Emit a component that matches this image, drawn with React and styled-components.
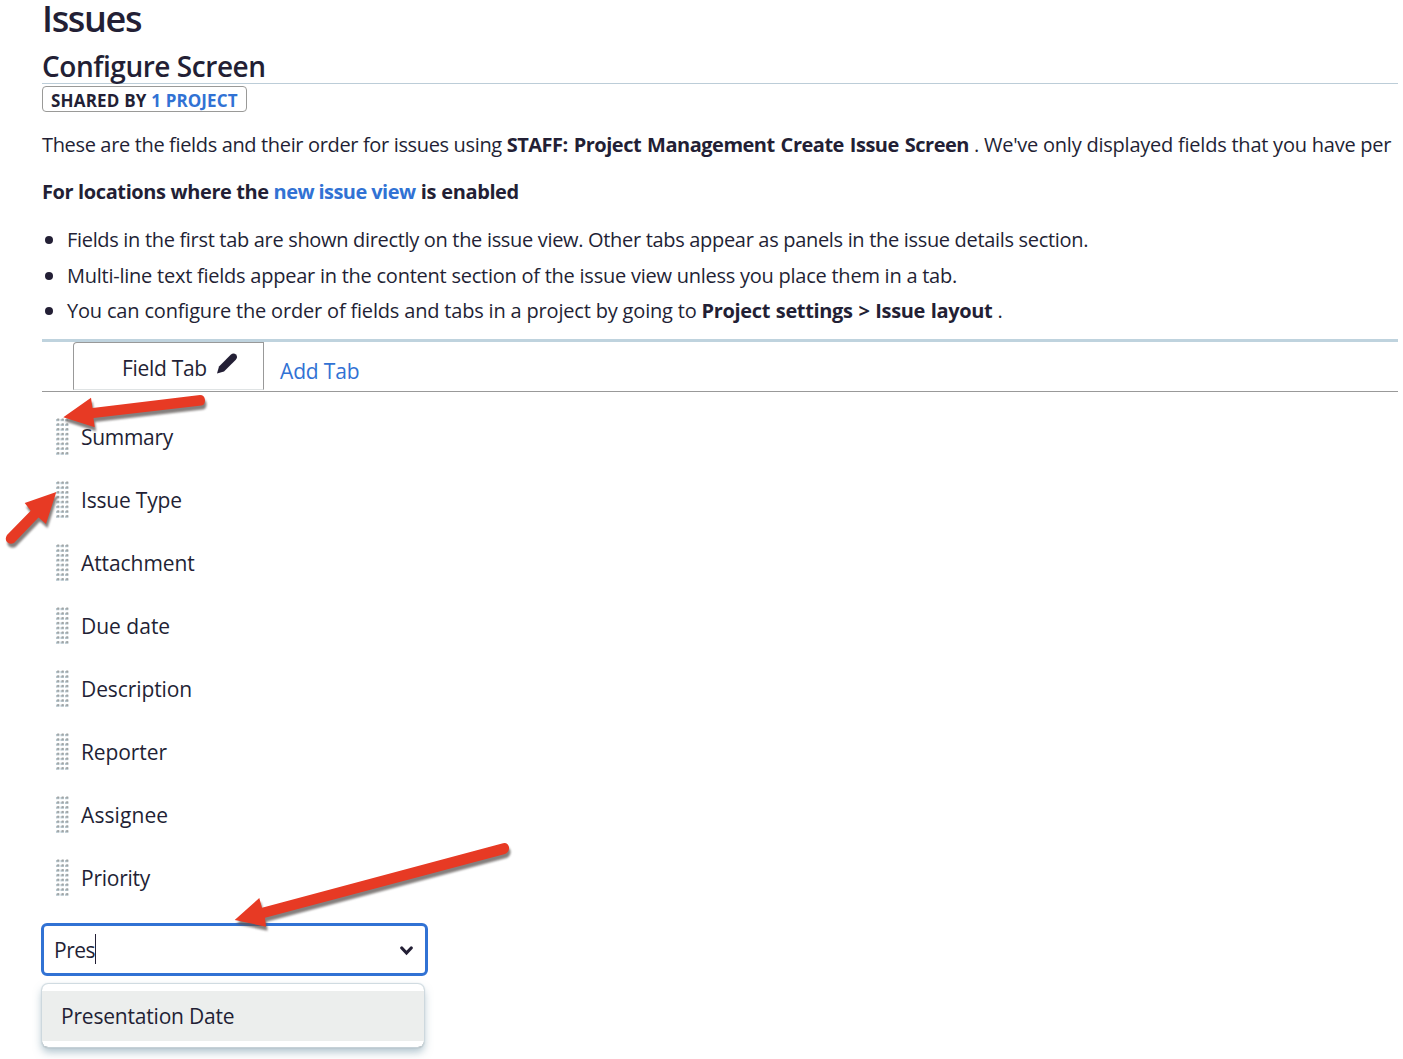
import React from "react";
import styled, { createGlobalStyle } from "styled-components";

const ink = "#231f35";
const blue = "#3172d4";

const GlobalStyle = createGlobalStyle`
  * { box-sizing: border-box; }
  body {
    margin: 0;
    background: #fff;
    color: ${ink};
    font-family: "Open Sans", "Noto Sans", sans-serif;
    overflow: hidden;
  }
`;

const Page = styled.main`
  position: relative;
  width: 1403px;
  height: 1059px;
  padding: 0 5px 0 42px;
  overflow: hidden;
`;

const Run = styled.span`
  letter-spacing: ${(p) => p.$ls || 0}px;
  word-spacing: ${(p) => p.$ws || 0}px;
  font-weight: ${(p) => (p.$bold ? 700 : "inherit")};
  color: ${(p) => (p.$link ? blue : "inherit")};
  white-space: pre;
`;

const Title = styled.h1`
  margin: 0;
  font-size: 36px;
  line-height: 37px;
  font-weight: 600;
`;

const Subtitle = styled.h2`
  margin: 0;
  padding-top: 11px;
  height: 47px;
  border-bottom: 1px solid #bccdd8;
  font-size: 28px;
  line-height: 37px;
  font-weight: 600;
`;

const SharedBadge = styled.div`
  width: 205px;
  height: 26px;
  margin-top: 2px;
  padding-left: 8px;
  border: 1px solid #9a9a98;
  border-radius: 4px;
  font-size: 17px;
  line-height: 28px;
  font-weight: 700;
  white-space: nowrap;
`;

const Paragraph = styled.p`
  margin: ${(p) => p.$top}px 0 0;
  font-size: 20px;
  line-height: 30px;
  white-space: nowrap;
`;

const Notes = styled.ul`
  margin: 15px 0 0;
  padding: 0;
  list-style: none;
  height: 117px;
`;

const Note = styled.li`
  display: flex;
  align-items: center;
  height: 35.5px;
  font-size: 20px;
  line-height: 35px;
  white-space: nowrap;

  &::before {
    content: "";
    width: 8px;
    height: 8px;
    margin: 1px 14px 0 3px;
    border-radius: 50%;
    background: ${ink};
    flex: none;
  }
`;

const TabBar = styled.nav`
  display: flex;
  height: 53px;
  padding-left: 31px;
  border-top: 3px solid #bfd3de;
  border-bottom: 1px solid #999;
  font-size: 21px;
`;

const ActiveTab = styled.div`
  display: flex;
  width: 191px;
  height: 48px;
  padding-left: 48px;
  border: 1px solid #999;
  border-bottom-color: #dfe3e4;
  border-radius: 4px 0 0 0;
  line-height: 51px;
  white-space: nowrap;

  svg { margin: 9px 0 0 9px; flex: none; }
`;

const AddTab = styled.a`
  margin-left: 16px;
  color: ${blue};
  line-height: 58px;
`;

const FieldList = styled.div`
  height: 531px;
  padding-top: 13px;
`;

const FieldRow = styled.div`
  display: flex;
  align-items: center;
  height: 63px;
  padding-left: 14px;
  font-size: 21px;
  line-height: 30px;

  svg { margin-right: 12px; flex: none; }
`;

const Select = styled.div`
  display: flex;
  align-items: center;
  width: 387px;
  height: 53px;
  margin-left: -1px;
  padding: 0 11px 0 10px;
  border: 3px solid ${blue};
  border-radius: 6px;
  font-size: 21px;

  span { padding-top: 1px; }
  svg { margin: 2px 0 0 auto; }
`;

const Caret = styled.i`
  width: 1px;
  height: 30px;
  margin-top: -2px;
  background: ${ink};
`;

const Menu = styled.div`
  width: 382px;
  height: 63px;
  margin: 8px 0 0;
  padding: 7px 0 6px;
  border-radius: 6px;
  box-shadow: 0 0 1px 1px #ccd8de, 0 1px 1px #8e9293, 0 5px 9px rgba(95, 135, 155, 0.5);
`;

const Option = styled.div`
  height: 50px;
  padding-left: 19px;
  background: #eceeed;
  font-size: 21px;
  line-height: 50px;
`;

const Annotations = styled.svg`
  position: absolute;
  left: 0;
  top: 0;
  pointer-events: none;
`;

const DragHandle = () => (
  <svg width="13" height="37" viewBox="0 0 13 37">
    {Array.from({ length: 24 }, (_, i) => {
      const x = (i % 3) * 4.5;
      const y = Math.floor(i / 3) * 4.8;
      return (
        <g key={i}>
          <rect x={x} y={y + 1} width="3.4" height="2.2" fill="#b9c9d1" />
          <rect x={x + 1.2} y={y + 0.5} width="2" height="2" fill="#a0a4a4" />
        </g>
      );
    })}
  </svg>
);

const Pencil = () => (
  <svg width="22" height="23" viewBox="0 0 22 23" fill={ink}>
    <path d="M1 21.5 L3 14.5 L14.7 2.8 Q17.5 0.4 20 2.6 Q22.2 5.1 19.8 7.8 L8 19.4 Z" />
  </svg>
);

const Chevron = () => (
  <svg width="14" height="10" viewBox="0 0 14 10" fill="none" stroke={ink} strokeWidth="3.2">
    <path d="M1.8 2 L6.5 7 L11.2 2" strokeLinecap="round" />
  </svg>
);

const fields = [
  ["Summary", -0.3],
  ["Issue Type", -0.2],
  ["Attachment", -0.08],
  ["Due date", 0],
  ["Description", -0.1],
  ["Reporter", -0.1],
  ["Assignee", 0.1],
  ["Priority", -0.25],
];

const arrows = [
  "M63.3 417.3 L91 397.7 L92.5 408 L200 395 Q204.5 395 205 400 Q205 405 201.5 405.5 L93.5 418 L94.7 427.3 Z",
  "M56.3 492 L24.7 503 L30.7 510.7 L7 535 Q4.5 539 7 542 Q10 545 14 543 L38.5 517.5 L46 524 Z",
  "M234.7 920 L259.3 898 L262 907.7 L503 843.2 Q507.5 842 509 847 Q509.5 852 505 854 L265 917.8 L266 926.7 Z",
];

export default function App() {
  return (
    <Page>
      <GlobalStyle />
      <Title><Run $ls={-1.35}>Issues</Run></Title>
      <Subtitle><Run $ls={-0.45}>Configure Screen</Run></Subtitle>
      <SharedBadge>
        <Run $ls={0.2}>SHARED BY </Run>
        <Run $link $ls={0.1}>1 PROJECT</Run>
      </SharedBadge>
      <Paragraph $top={18}>
        <Run $ls={-0.35}>These are the fields and their order for issues using </Run>
        <Run $bold $ls={-0.49} $ws={1.2}>STAFF: Project Management Create Issue Screen</Run>
        <Run $ls={-0.23}> . We've only displayed fields that you have per</Run>
      </Paragraph>
      <Paragraph $top={17}>
        <Run $bold $ls={-0.39}>For locations where the </Run>
        <Run $bold $link $ls={-0.57}>new issue view</Run>
        <Run $bold $ls={-0.4} $ws={0.5}> is enabled</Run>
      </Paragraph>
      <Notes>
        <Note><div><Run $ls={-0.32}>Fields in the first tab are shown directly on the issue view. Other tabs appear as panels in the issue details section.</Run></div></Note>
        <Note><div><Run $ls={-0.243}>Multi-line text fields appear in the content section of the issue view unless you place them in a tab.</Run></div></Note>
        <Note>
          <div>
            <Run $ls={-0.18}>You can configure the order of fields and tabs in a project by going to </Run>
            <Run $bold $ls={-0.36} $ws={1}>{"Project settings > Issue layout"}</Run>
            <Run> .</Run>
          </div>
        </Note>
      </Notes>
      <TabBar>
        <ActiveTab><Run $ls={-0.3}>Field Tab</Run><Pencil /></ActiveTab>
        <AddTab><Run $ls={-0.15}>Add Tab</Run></AddTab>
      </TabBar>
      <FieldList>
        {fields.map(([name, ls]) => (
          <FieldRow key={name}><DragHandle /><Run $ls={ls}>{name}</Run></FieldRow>
        ))}
      </FieldList>
      <Select><Run $ls={-0.5}>Pres</Run><Caret /><Chevron /></Select>
      <Menu><Option><Run $ls={-0.2}>Presentation Date</Run></Option></Menu>
      <Annotations width="1403" height="1059" viewBox="0 0 1403 1059">
        <defs>
          <filter id="soft" x="-20%" y="-20%" width="140%" height="150%">
            <feGaussianBlur stdDeviation="1.3" />
          </filter>
        </defs>
        {arrows.map((d) => (
          <g key={d}>
            <path d={d} fill="#5b5552" opacity="0.75" transform="translate(1.5 4)" filter="url(#soft)" />
            <path d={d} fill="#e73a24" />
          </g>
        ))}
      </Annotations>
    </Page>
  );
}
